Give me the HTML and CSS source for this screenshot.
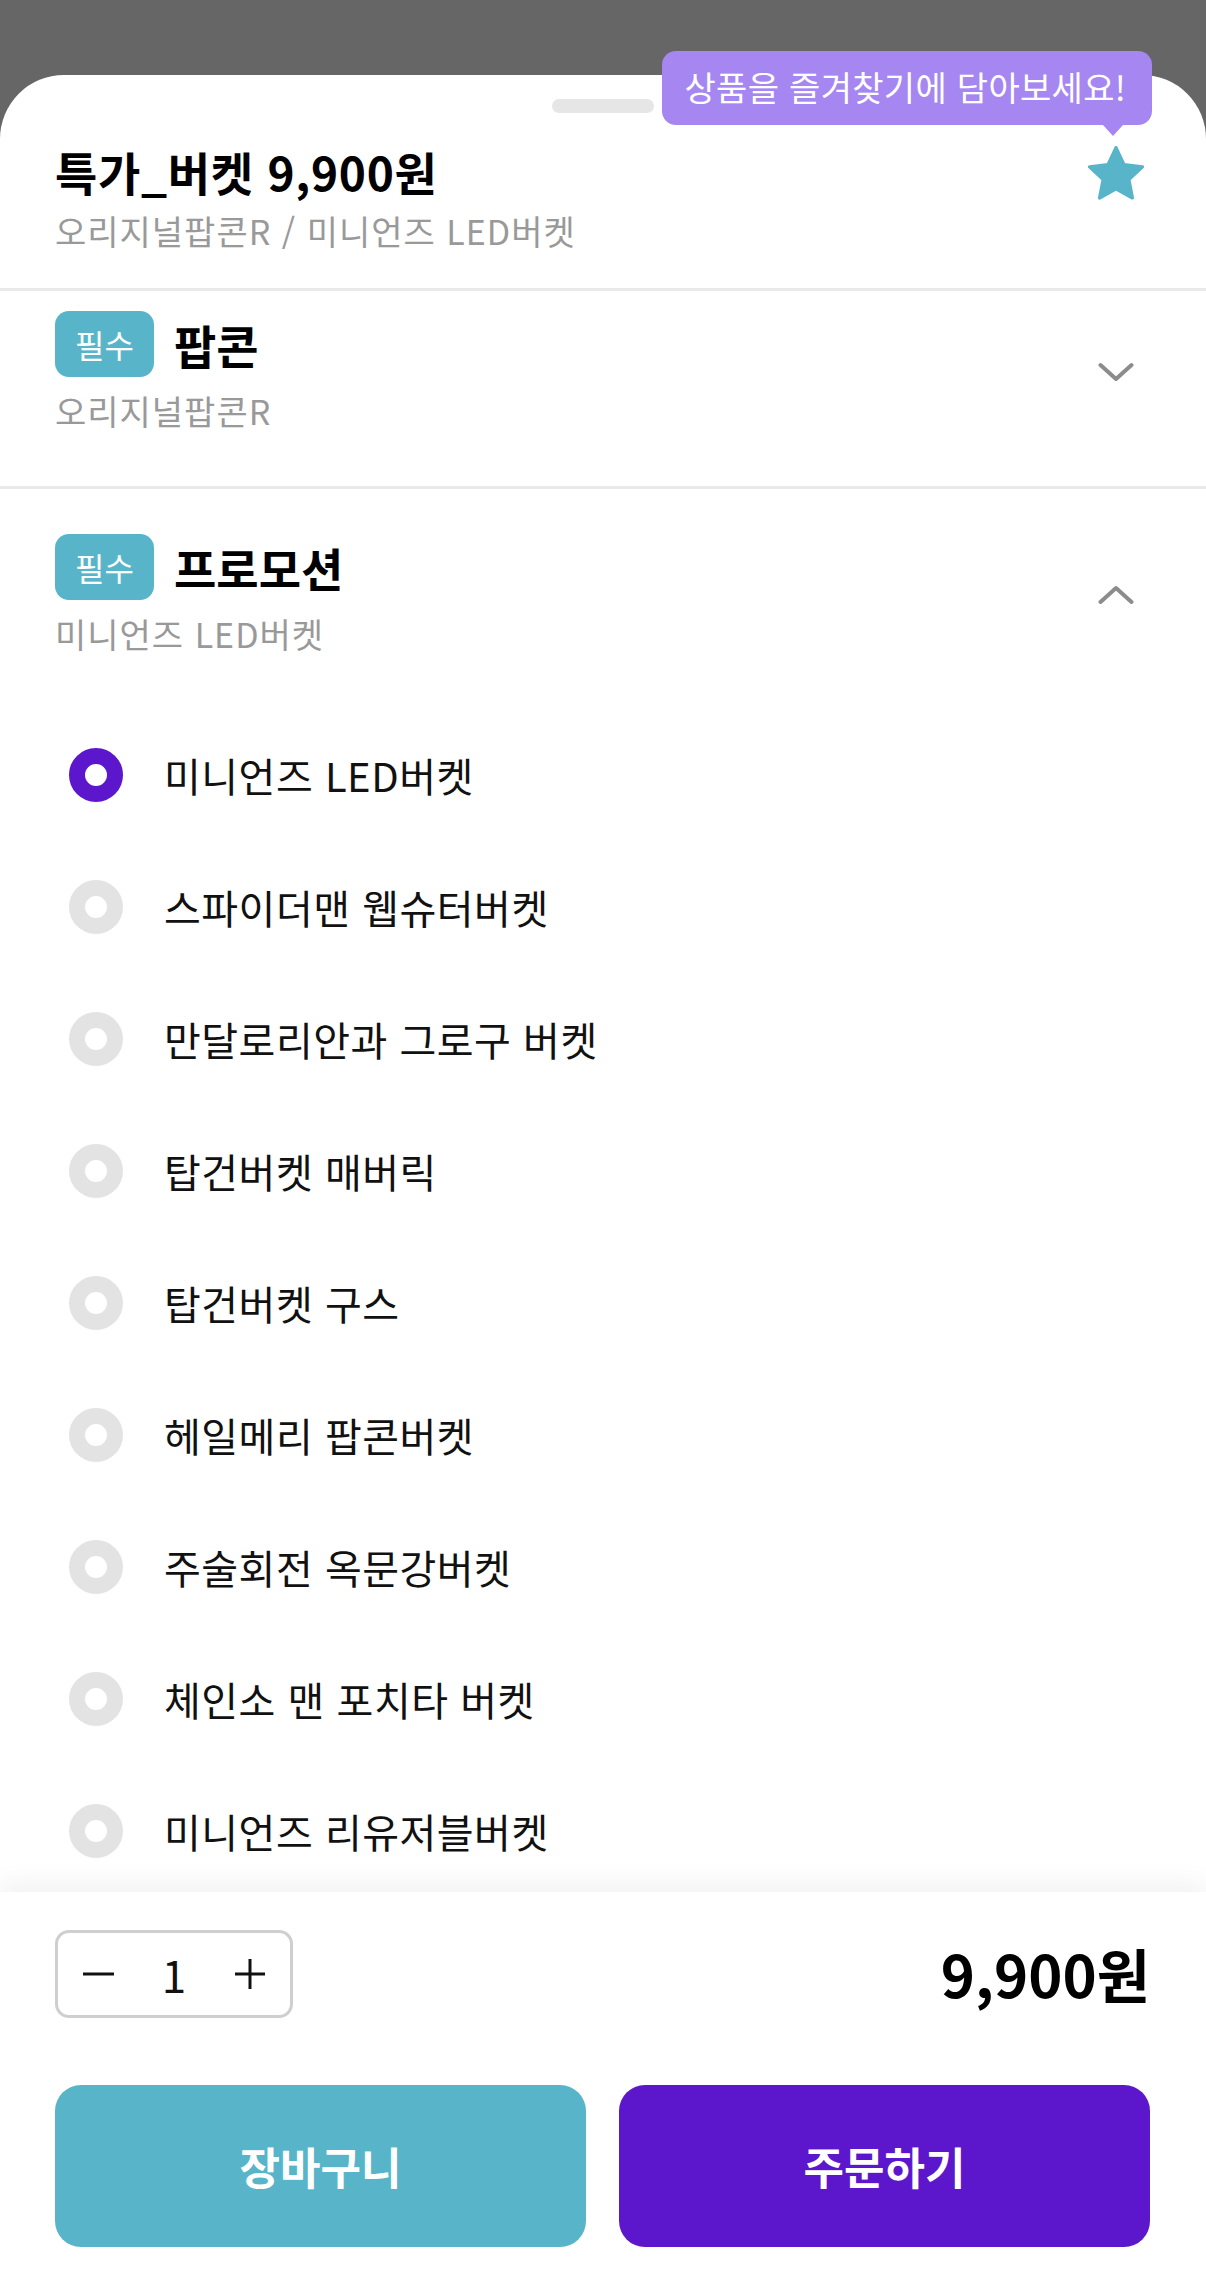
FILE: index.html
```html
<!DOCTYPE html>
<html lang="ko">
<head>
    <meta charset="UTF-8">
    <meta name="viewport" content="width=device-width, initial-scale=1">
    <title>특가_버켓 옵션 선택</title>
    <link rel="stylesheet" href="styles.css">
</head>
<body>
    <div class="sheet">
        <div class="handle"></div>

        <div class="header">
            <div>
                <h1 class="title">특가_버켓 9,900원</h1>
                <p class="sub">오리지널팝콘R / 미니언즈 LED버켓</p>
            </div>
            <div class="fav">
                <div class="tip">상품을 즐겨찾기에 담아보세요!</div>
                <svg width="56" height="56" viewBox="2 2 20 20">
                    <path d="M12 2.6l2.85 6.05 6.6.8-4.87 4.55 1.27 6.55L12 17.3l-5.85 3.25 1.27-6.55L2.55 9.45l6.6-.8z" fill="#58b5c9" stroke="#58b5c9" stroke-width="1.2" stroke-linejoin="round"/>
                </svg>
            </div>
        </div>

        <div class="scroll">
            <div class="opt first">
                <div>
                    <div class="opt-head">
                        <span class="badge">필수</span>
                        <span class="opt-name">팝콘</span>
                    </div>
                    <p class="sub opt-sub">오리지널팝콘R</p>
                </div>
                <svg class="chev" width="36" height="20" viewBox="0 0 36 20">
                    <polyline points="2.5,3 18,17 33.5,3" fill="none" stroke="#8c8c8c" stroke-width="4" stroke-linecap="round" stroke-linejoin="round"/>
                </svg>
            </div>

            <div class="opt second">
                <div>
                    <div class="opt-head">
                        <span class="badge">필수</span>
                        <span class="opt-name">프로모션</span>
                    </div>
                    <p class="sub opt-sub">미니언즈 LED버켓</p>
                </div>
                <svg class="chev" width="36" height="20" viewBox="0 0 36 20">
                    <polyline points="2.5,17 18,3 33.5,17" fill="none" stroke="#8c8c8c" stroke-width="4" stroke-linecap="round" stroke-linejoin="round"/>
                </svg>
            </div>

            <ul class="list">
                <li class="item"><span class="radio on"></span>미니언즈 LED버켓</li>
                <li class="item"><span class="radio"></span>스파이더맨 웹슈터버켓</li>
                <li class="item"><span class="radio"></span>만달로리안과 그로구 버켓</li>
                <li class="item"><span class="radio"></span>탑건버켓 매버릭</li>
                <li class="item"><span class="radio"></span>탑건버켓 구스</li>
                <li class="item"><span class="radio"></span>헤일메리 팝콘버켓</li>
                <li class="item"><span class="radio"></span>주술회전 옥문강버켓</li>
                <li class="item"><span class="radio"></span>체인소 맨 포치타 버켓</li>
                <li class="item"><span class="radio"></span>미니언즈 리유저블버켓</li>
            </ul>
        </div>

        <div class="foot">
            <div class="qty-row">
                <div class="stepper">
                    <span class="step">
                        <svg width="31" height="4" viewBox="0 0 31 4"><line x1="0" y1="2" x2="31" y2="2" stroke="#111" stroke-width="3"/></svg>
                    </span>
                    <span class="step num">1</span>
                    <span class="step">
                        <svg width="30" height="30" viewBox="0 0 30 30"><line x1="0" y1="15" x2="30" y2="15" stroke="#111" stroke-width="3"/><line x1="15" y1="0" x2="15" y2="30" stroke="#111" stroke-width="3"/></svg>
                    </span>
                </div>
                <div class="price">9,900원</div>
            </div>
            <div class="btns">
                <button class="btn cart">장바구니</button>
                <button class="btn order">주문하기</button>
            </div>
        </div>
    </div>
</body>
</html>
```

FILE: styles.css
```css
body {
    margin: 0;
    background-color: #666666;
    font-family: "Noto Sans CJK KR", "Noto Sans", sans-serif;
    color: #111;
}
p, h1, ul {
    margin: 0;
    padding: 0;
}
.sheet {
    margin-top: 75px;
    height: 2197px;
    background: #fff;
    border-radius: 64px 64px 0 0;
    display: flex;
    flex-direction: column;
}
.handle {
    width: 102px;
    height: 14px;
    border-radius: 7px;
    background: #e6e6e6;
    margin: 24px auto 0;
}

/* header */
.header {
    display: flex;
    justify-content: space-between;
    align-items: flex-start;
    padding: 28px 56px 35px 55px;
    border-bottom: 3px solid #e9e9e9;
}
.title {
    font-size: 46px;
    font-weight: 700;
    line-height: 60px;
    letter-spacing: 0.7px;
    color: #000;
}
.sub {
    font-size: 34px;
    line-height: 44px;
    letter-spacing: 1px;
    color: #999;
    margin-top: 8px;
}
.fav {
    position: relative;
    width: 56px;
    height: 56px;
    margin-top: 5px;
    margin-right: 6px;
}
.fav svg {
    display: block;
}
.tip {
    position: absolute;
    right: -8px;
    bottom: calc(100% + 21px);
    height: 74px;
    line-height: 72px;
    padding: 0 26px 0 23px;
    border-radius: 14px;
    background: #a687f2;
    color: #fff;
    font-size: 34px;
    letter-spacing: 0.3px;
    white-space: nowrap;
}
.tip::after {
    content: "";
    position: absolute;
    top: 100%;
    right: 29px;
    border-left: 10px solid transparent;
    border-right: 10px solid transparent;
    border-top: 11px solid #a687f2;
}

/* options */
.scroll {
    flex: 1;
    min-height: 0;
    overflow: hidden;
}
.opt {
    display: flex;
    justify-content: space-between;
    align-items: center;
    padding: 20px 72px 53px 55px;
}
.opt.first {
    border-bottom: 3px solid #e9e9e9;
}
.opt.second {
    padding-top: 45px;
}
.opt-head {
    display: flex;
    align-items: center;
    gap: 20px;
}
.badge {
    width: 99px;
    height: 66px;
    border-radius: 14px;
    background: #58b5c9;
    color: #fff;
    font-size: 32px;
    display: flex;
    align-items: center;
    justify-content: center;
}
.opt-name {
    font-size: 46px;
    font-weight: 700;
    line-height: 60px;
    color: #000;
}
.opt-sub {
    margin-top: 12px;
}
.chev {
    display: block;
}

.list {
    list-style: none;
}
.item {
    display: flex;
    align-items: center;
    gap: 41px;
    height: 132px;
    padding-left: 69px;
    font-size: 40px;
    letter-spacing: 0.5px;
}
.radio {
    width: 54px;
    height: 54px;
    box-sizing: border-box;
    border-radius: 50%;
    border: 16px solid #e3e3e3;
    background: #fff;
}
.radio.on {
    border-color: #5c17cc;
}

/* footer */
.foot {
    position: relative;
    z-index: 1;
    background: #fff;
    box-shadow: 0 -8px 26px rgba(0,0,0,0.06);
    padding: 38px 56px 25px 55px;
}
.qty-row {
    display: flex;
    justify-content: space-between;
    align-items: center;
}
.stepper {
    width: 238px;
    height: 88px;
    box-sizing: border-box;
    border: 3px solid #cfcfcf;
    border-radius: 14px;
    display: flex;
    align-items: center;
    padding-left: 2px;
}
.step {
    width: 76px;
    display: flex;
    justify-content: center;
    align-items: center;
}
.step svg {
    display: block;
}
.num {
    font-size: 44px;
    line-height: 60px;
}
.price {
    font-size: 58px;
    font-weight: 700;
    line-height: 1.2;
    color: #000;
}
.btns {
    display: grid;
    grid-template-columns: 1fr 1fr;
    gap: 33px;
    margin-top: 67px;
}
.btn {
    height: 162px;
    border: none;
    border-radius: 26px;
    color: #fff;
    font-family: inherit;
    font-size: 44px;
    font-weight: 700;
    cursor: pointer;
}
.cart {
    background-color: #58b5c9;
}
.order {
    background-color: #5c17cc;
}
```
